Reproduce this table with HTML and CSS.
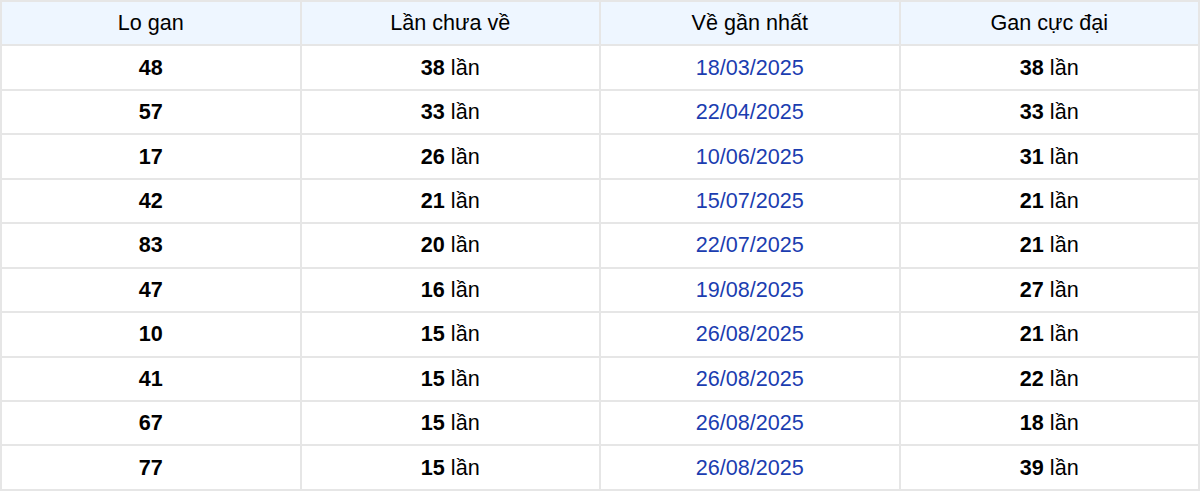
FILE: index.html
```html
<!DOCTYPE html>
<html lang="vi">
<head>
<meta charset="utf-8">
<title>Lo gan</title>
<link rel="stylesheet" href="styles.css">
</head>
<body>
<table class="gan-table">
  <thead>
    <tr><th>Lo gan</th><th>Lần chưa về</th><th>Về gần nhất</th><th>Gan cực đại</th></tr>
  </thead>
  <tbody>
    <tr><td class="num">48</td><td><b>38</b> lần</td><td class="date">18/03/2025</td><td><b>38</b> lần</td></tr>
    <tr><td class="num">57</td><td><b>33</b> lần</td><td class="date">22/04/2025</td><td><b>33</b> lần</td></tr>
    <tr><td class="num">17</td><td><b>26</b> lần</td><td class="date">10/06/2025</td><td><b>31</b> lần</td></tr>
    <tr><td class="num">42</td><td><b>21</b> lần</td><td class="date">15/07/2025</td><td><b>21</b> lần</td></tr>
    <tr><td class="num">83</td><td><b>20</b> lần</td><td class="date">22/07/2025</td><td><b>21</b> lần</td></tr>
    <tr><td class="num">47</td><td><b>16</b> lần</td><td class="date">19/08/2025</td><td><b>27</b> lần</td></tr>
    <tr><td class="num">10</td><td><b>15</b> lần</td><td class="date">26/08/2025</td><td><b>21</b> lần</td></tr>
    <tr><td class="num">41</td><td><b>15</b> lần</td><td class="date">26/08/2025</td><td><b>22</b> lần</td></tr>
    <tr><td class="num">67</td><td><b>15</b> lần</td><td class="date">26/08/2025</td><td><b>18</b> lần</td></tr>
    <tr><td class="num">77</td><td><b>15</b> lần</td><td class="date">26/08/2025</td><td><b>39</b> lần</td></tr>
  </tbody>
</table>
</body>
</html>
```
FILE: styles.css
```css
html, body {
  margin: 0;
  padding: 0;
  background: #ffffff;
}
body {
  font-family: "Liberation Sans", Arial, sans-serif;
  color: #000000;
}
.gan-table {
  width: 1200px;
  border-collapse: collapse;
  table-layout: fixed;
  font-size: 21.6px;
}
.gan-table th,
.gan-table td {
  border: 2px solid #e6e6e6;
  text-align: center;
  vertical-align: middle;
  height: 44.45px;
  padding: 0;
  box-sizing: border-box;
}
.gan-table th {
  background: #eef6ff;
  font-weight: normal;
}
.gan-table td.num,
.gan-table b {
  font-weight: bold;
}
.gan-table td.date {
  color: #1b3db0;
}
```
